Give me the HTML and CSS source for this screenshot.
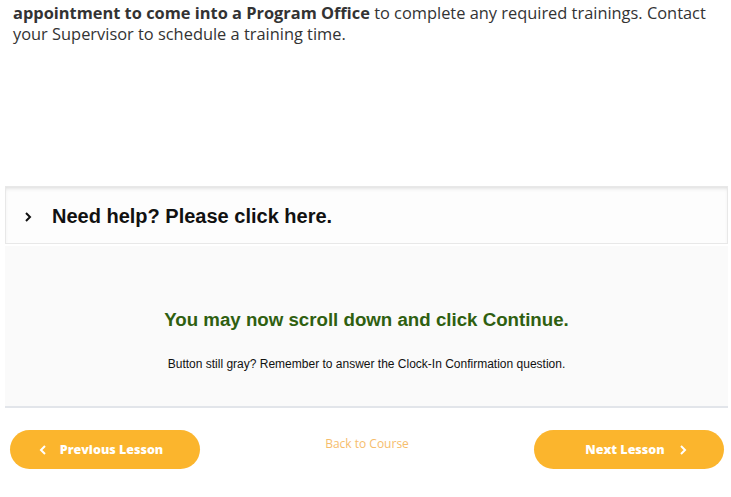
FILE: index.html
```html
<!DOCTYPE html>
<html lang="en">
<head>
    <meta charset="UTF-8">
    <meta name="viewport" content="width=device-width, initial-scale=1.0">
    <title>Lesson</title>
    <link rel="stylesheet" href="styles.css">
</head>
<body>

    <div class="lesson">
        <p class="intro"><strong>appointment to come into a Program Office</strong> to complete any required trainings. Contact your Supervisor to schedule a training time.</p>

        <div class="help">
            <svg class="chev" width="8" height="12" viewBox="0 0 8 12"><path d="M2 2l4 4-4 4" fill="none" stroke="#111" stroke-width="2"/></svg>
            <span>Need help? Please click here.</span>
        </div>

        <div class="notice">
            <h3>You may now scroll down and click Continue.</h3>
            <p>Button still gray? Remember to answer the Clock-In Confirmation question.</p>
        </div>
    </div>

    <div class="nav">
        <a class="btn" href="#">
            <svg width="8" height="12" viewBox="0 0 8 12"><path d="M6 2L2 6l4 4" fill="none" stroke="#fff" stroke-width="2"/></svg>
            Previous Lesson
        </a>
        <a class="back" href="#">Back to Course</a>
        <a class="btn next" href="#">
            Next Lesson
            <svg width="8" height="12" viewBox="0 0 8 12"><path d="M2 2l4 4-4 4" fill="none" stroke="#fff" stroke-width="2"/></svg>
        </a>
    </div>

</body>
</html>
```

FILE: styles.css
```css
body {
    margin: 0;
    background-color: #fff;
    font-family: "Open Sans", sans-serif;
}
.lesson {
    margin: 0 3px 0 5px;
    border-bottom: 2px solid #e2e5ea;
}
.intro {
    margin: 0;
    padding: 2px 22px 0 8px;
    font-size: 16.4px;
    line-height: 21px;
    color: #333;
    height: 186px;
    box-sizing: border-box;
}
.help {
    display: flex;
    align-items: center;
    height: 58px;
    box-sizing: border-box;
    border: 1px solid #e8e8e8;
    background-color: #fdfdfd;
    box-shadow: inset 0 3px 4px -2px rgba(0, 0, 0, 0.15);
    padding-left: 18px;
    padding-top: 3px;
    font-family: "Liberation Sans", Arial, sans-serif;
    font-weight: bold;
    font-size: 20px;
    color: #111;
}
.chev {
    margin-right: 20px;
}
.notice {
    margin-top: 2px;
    background-color: #fafafa;
    height: 160px;
    box-sizing: border-box;
    padding-top: 63px;
    text-align: center;
    font-family: "Liberation Sans", Arial, sans-serif;
}
.notice h3 {
    margin: 0;
    font-size: 18.7px;
    color: #2f5f10;
}
.notice p {
    margin: 26px 0 0;
    font-size: 12px;
    color: #111;
}
.nav {
    display: flex;
    align-items: center;
    justify-content: space-between;
    padding: 22px 7px 0 10px;
}
.btn {
    display: flex;
    align-items: center;
    justify-content: center;
    gap: 13px;
    width: 190px;
    height: 39px;
    border-radius: 20px;
    background-color: #fbb52d;
    color: #fff;
    font-weight: 800;
    font-size: 12.5px;
    text-decoration: none;
    padding-right: 8px;
    box-sizing: border-box;
}
.btn.next {
    padding: 0 0 0 14px;
    gap: 14px;
}
.back {
    color: #f6bd6c;
    font-size: 12px;
    text-decoration: none;
    margin-top: -12px;
}
```
